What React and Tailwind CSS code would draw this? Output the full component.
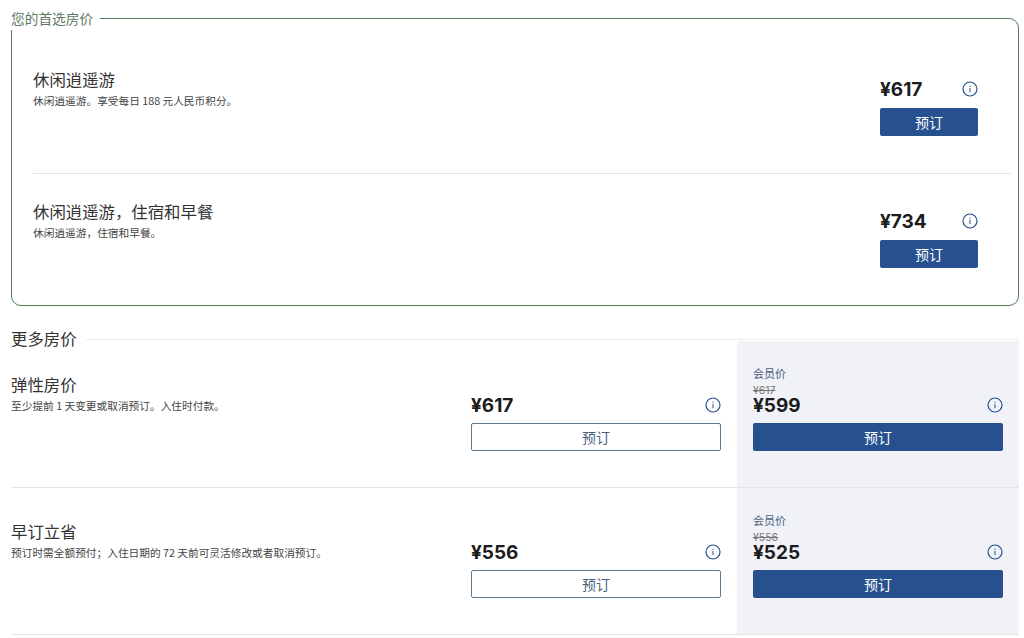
import React from 'react';

const font = "font-['Noto_Sans_CJK_SC','Liberation_Sans',sans-serif]";

const InfoIcon = () => (
  <svg width="16" height="16" viewBox="0 0 16 16" fill="none" className="block">
    <circle cx="8" cy="8" r="7" stroke="#27508f" strokeWidth="1.2" />
    <rect x="7.5" y="7" width="1" height="4.2" fill="#27508f" />
    <rect x="7.5" y="4.7" width="1" height="1.2" fill="#27508f" />
  </svg>
);

const Price = ({ value }) => (
  <span className="font-['Inter','Liberation_Sans',sans-serif] text-[19px] font-bold leading-none text-[#1c1c1c]">
    {value}
  </span>
);

const RateName = ({ title, desc }) => (
  <>
    <div className="text-[16.4px] leading-[22px] text-[#333]">{title}</div>
    <div className="mt-[3px] text-[10.7px] leading-[16px] text-[#444]">{desc}</div>
  </>
);

const PreferredRow = ({ title, desc, price, last }) => (
  <div className={`ml-[21px] mr-[7px] flex h-[132px] justify-between ${last ? '' : 'border-b border-[#e4e4e4]'}`}>
    <div className="pt-[26px]">
      <RateName title={title} desc={desc} />
    </div>
    <div className="mr-[33px] w-[98px] pt-[34px]">
      <div className="flex h-[26px] items-center justify-between">
        <Price value={price} />
        <InfoIcon />
      </div>
      <button className="mt-[6px] h-[28px] w-full rounded-[2px] bg-[#27508f] text-sm text-white">预订</button>
    </div>
  </div>
);

const RateRow = ({ title, desc, price, member }) => (
  <div className="flex h-[147px] border-b border-[#e4e4e4]">
    <div className="w-[460px] pt-[32px]">
      <RateName title={title} desc={desc} />
    </div>
    <div className="w-[250px] pt-[51px]">
      <div className="flex h-[26px] items-center justify-between">
        <Price value={price} />
        <InfoIcon />
      </div>
      <button className="mt-[5px] h-[28px] w-full rounded-[2px] border border-[#5b7a94] bg-white text-sm text-[#4a5f80]">预订</button>
    </div>
    <div className="ml-[16px] w-[282px] bg-[#f0f2f8] px-4 pt-[25px]">
      <div className="text-[11px] leading-[14px] text-[#4a5f80]">会员价</div>
      <div className="mt-[5px] font-['Inter','Liberation_Sans',sans-serif] text-[10.5px] leading-[12px] text-[#777] line-through">{price}</div>
      <div className="-mt-[3px] flex h-[22px] items-center justify-between">
        <Price value={member} />
        <InfoIcon />
      </div>
      <button className="mt-[7px] h-[28px] w-full rounded-[2px] bg-[#27508f] text-sm text-white">预订</button>
    </div>
  </div>
);

export default function App() {
  return (
    <div className={`${font} h-[638px] overflow-hidden bg-white pl-[11px] pr-[5px] pt-[9px]`}>
      <fieldset className="h-[297px] rounded-[10px] border border-[#4d7a55]">
        <legend className="relative -ml-[1px] pr-[7px] text-[13.7px] leading-[18px] text-[#5f7a64]">
          您的首选房价
          <span className="absolute left-0 top-full h-[3px] w-[12px] bg-white" />
        </legend>
        <div className="mt-[15px]">
          <PreferredRow title="休闲逍遥游" desc="休闲逍遥游。享受每日 188 元人民币积分。" price="¥617" />
          <PreferredRow title="休闲逍遥游，住宿和早餐" desc="休闲逍遥游，住宿和早餐。" price="¥734" last />
        </div>
      </fieldset>

      <div className="relative z-10 mt-[21px] -mb-[8px] flex h-[22px] items-center">
        <span className="text-[16.4px] leading-[22px] text-[#333]">更多房价</span>
        <div className="ml-[9px] mt-[3px] h-px flex-1 bg-[#ececec]" />
      </div>

      <RateRow title="弹性房价" desc="至少提前 1 天变更或取消预订。入住时付款。" price="¥617" member="¥599" />
      <RateRow title="早订立省" desc="预订时需全额预付；入住日期的 72 天前可灵活修改或者取消预订。" price="¥556" member="¥525" />
    </div>
  );
}
